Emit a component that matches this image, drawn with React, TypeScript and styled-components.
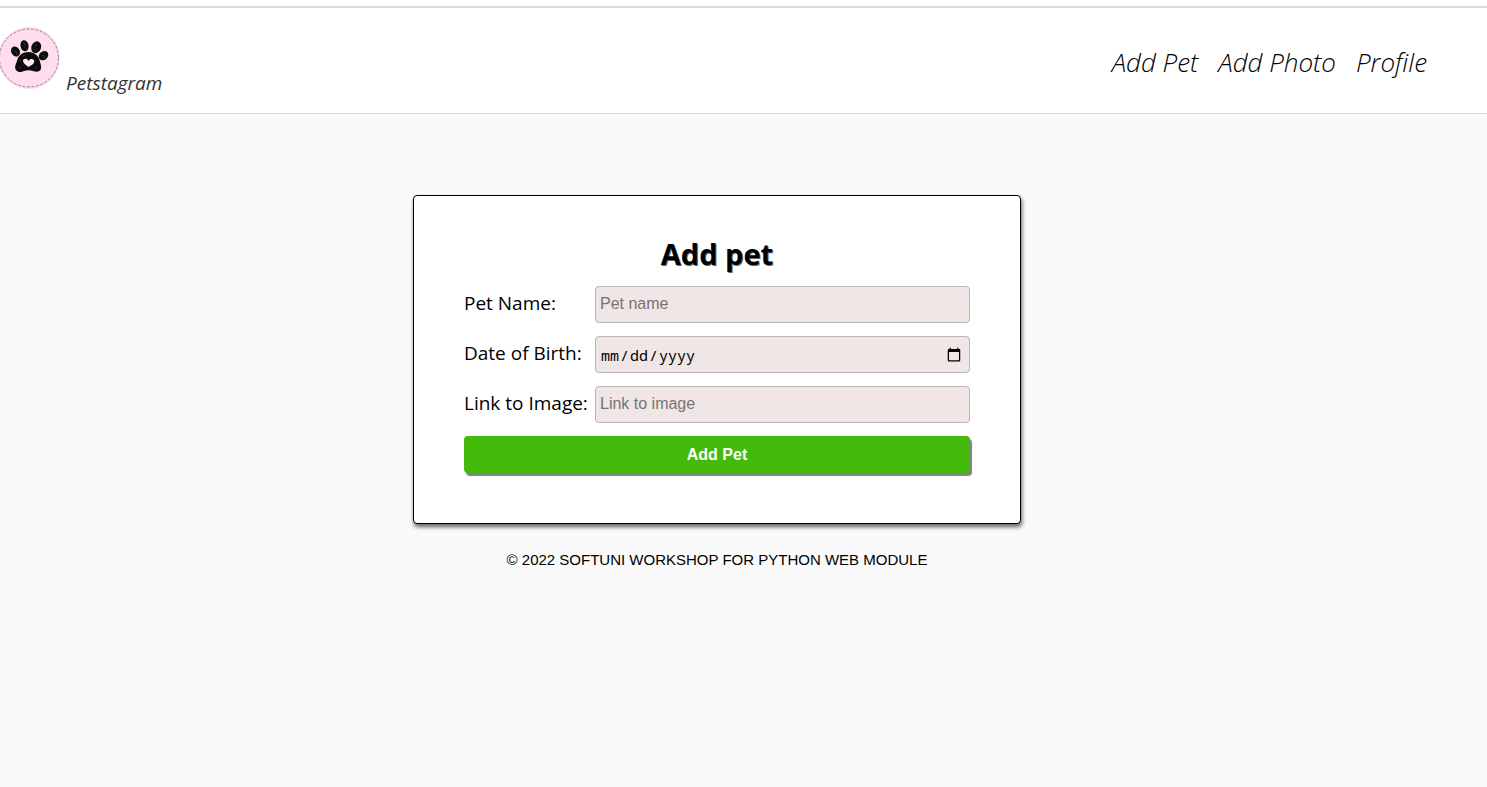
import React from "react";
import styled, { createGlobalStyle } from "styled-components";

const GlobalStyle = createGlobalStyle`
  *, *::before, *::after { box-sizing: border-box; }
  body {
    margin: 0;
    background: #fafafa;
    color: #000;
    font-family: "Segoe UI", "Open Sans", "Noto Sans", sans-serif;
  }
`;

const Header = styled.header`
  display: flex;
  justify-content: space-between;
  align-items: center;
  height: 108px;
  margin-top: 6px;
  padding: 2px 60px 0 0;
  background: #fff;
  border-top: 2px solid #dbdbdb;
  border-bottom: 1px solid #dbdbdb;
`;

const TopStrip = styled.div`
  background: #fff;
  display: flow-root;
`;

const Brand = styled.a`
  display: flex;
  align-items: flex-end;
  gap: 6px;
  color: #333;
  font-size: 19px;
  line-height: 28px;
  font-style: italic;
  text-decoration: none;
`;

const Logo = styled.svg`
  display: block;
  width: 60px;
  height: 62px;
  margin-bottom: 8px;
`;

const Nav = styled.nav`
  display: flex;
  gap: 20px;
`;

const NavLink = styled.a`
  color: #000;
  font-size: 26px;
  line-height: 36px;
  font-style: italic;
  font-weight: 300;
  text-decoration: none;
`;

const Main = styled.main`
  display: flex;
  flex-direction: column;
  align-items: center;
  padding: 81px 53px 0 0;
`;

const Card = styled.form`
  display: flex;
  flex-direction: column;
  gap: 13px;
  width: 100%;
  max-width: 608px;
  padding: 38px 50px 50px;
  background: #fff;
  border: 1px solid #000;
  border-radius: 4px;
  box-shadow: 1px 3px 4px rgba(0, 0, 0, 0.6);
`;

const Title = styled.h1`
  margin: 0;
  font-size: 29px;
  line-height: 39px;
  font-weight: 700;
  text-align: center;
  text-shadow: 1px 1px 0 #666;
`;

const Field = styled.div`
  display: grid;
  grid-template-columns: 131px 1fr;
  align-items: center;
`;

const Label = styled.label`
  font-size: 19px;
  line-height: 34px;
  padding-bottom: 3px;
  white-space: nowrap;
`;

const Input = styled.input`
  width: 100%;
  height: 37px;
  padding: 0 4px 2px;
  background: #f0e6e6;
  border: 1px solid #b8b4b4;
  border-radius: 4px;
  color: #000;
  font: 16px "Liberation Sans", Arial, sans-serif;

  &::placeholder {
    color: #757575;
  }

  &[type="date"] {
    padding: 0 5px 0 4px;
    font-family: "Noto Sans Mono", "DejaVu Sans Mono", monospace;
    font-size: 15px;
  }

  &::-webkit-calendar-picker-indicator {
    width: 16px;
    height: 16px;
  }
`;

const Submit = styled.button`
  height: 37px;
  padding: 0;
  background: #44ba0c;
  border: 0;
  border-radius: 4px;
  box-shadow: 2px 3px 1px #808080;
  color: #fff;
  font: 700 16px "Liberation Sans", Arial, sans-serif;
  cursor: pointer;
`;

const Footer = styled.footer`
  padding-top: 27px;
  font: 15px/18px "Liberation Sans", Arial, sans-serif;
  text-align: center;
`;

const fields = [
  { id: "pet-name", label: "Pet Name:", type: "text", placeholder: "Pet name" },
  { id: "birth-date", label: "Date of Birth:", type: "date" },
  { id: "image-link", label: "Link to Image:", type: "text", placeholder: "Link to image" },
];

function PawLogo() {
  return (
    <Logo viewBox="0 0 60 62" aria-hidden="true">
      <ellipse cx="29" cy="31" rx="31" ry="31" fill="#ffdcee" />
      <ellipse cx="29" cy="31" rx="29.5" ry="29" fill="none" stroke="#8d8089" strokeWidth="0.9" strokeDasharray="3 1.5" />
      <g fill="#0b0b0b">
        <ellipse cx="15.5" cy="24.5" rx="4.2" ry="5.2" transform="rotate(-32 15.5 24.5)" />
        <ellipse cx="24.5" cy="18.7" rx="4" ry="5.6" transform="rotate(-12 24.5 18.7)" />
        <ellipse cx="36.2" cy="20.2" rx="4.8" ry="6" transform="rotate(24 36.2 20.2)" />
        <ellipse cx="43.5" cy="28.7" rx="4.2" ry="5.2" transform="rotate(50 43.5 28.7)" />
        <path d="M28.500 25C22 25 18 29 17 34C16 37 14 40 16 43C18 46 22 45 24 44C27 43 30 43 33 44C36 45 39 45 40.500 43C42 40 40.500 37 39.800 34C38.500 29 35 25 28.500 25Z" />
      </g>
      <g fill="none" stroke="#555" strokeWidth="0.6" strokeLinecap="round">
        <path d="M13.500 23L15 25M16 24L17 27M24 16L24.500 18M25 20L26 21.500M35 19L37 18M35 23L36.500 22M42 29L44 28M43 31L45 30" />
        <path d="M20 34L21 32M19 41L20 40M23 29L25 28M36 41L37 40M22 39L23 38" />
      </g>
      <path d="M28.500 40C25 37.500 23 36 23 33.800C23 31.500 27 30.800 28.600 34C30 31 34.500 31.500 34.300 34.500C34 37 31 38.500 28.500 40Z" fill="#ffe9f4" />
    </Logo>
  );
}

export default function App() {
  return (
    <>
      <GlobalStyle />
      <TopStrip>
        <Header>
          <Brand href="#">
            <PawLogo />
            Petstagram
          </Brand>
          <Nav>
            <NavLink href="#">Add Pet</NavLink>
            <NavLink href="#">Add Photo</NavLink>
            <NavLink href="#">Profile</NavLink>
          </Nav>
        </Header>
      </TopStrip>
      <Main>
        <Card onSubmit={(e) => e.preventDefault()}>
          <Title>Add pet</Title>
          {fields.map((f) => (
            <Field key={f.id}>
              <Label htmlFor={f.id}>{f.label}</Label>
              <Input id={f.id} type={f.type} placeholder={f.placeholder} />
            </Field>
          ))}
          <Submit type="submit">Add Pet</Submit>
        </Card>
        <Footer>© 2022 SOFTUNI WORKSHOP FOR PYTHON WEB MODULE</Footer>
      </Main>
    </>
  );
}
